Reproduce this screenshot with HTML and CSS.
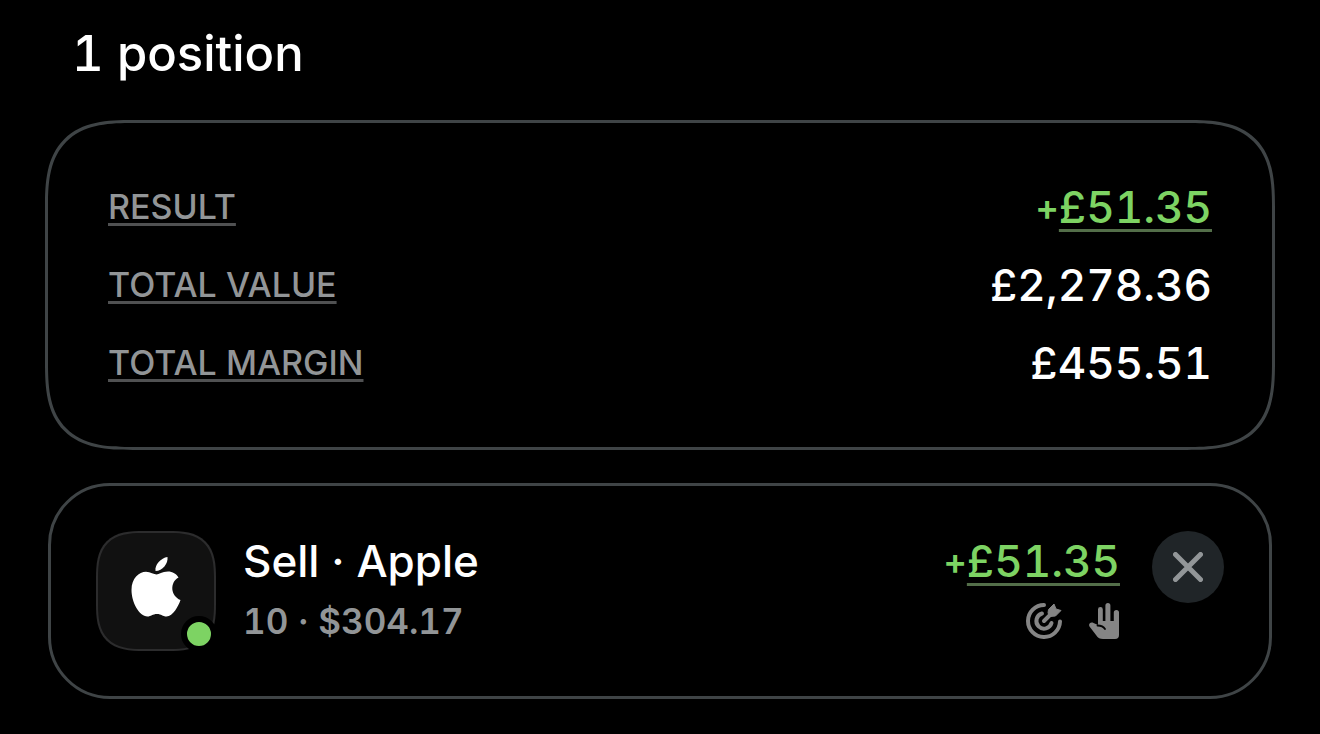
FILE: index.html
```html
<!doctype html>
<html lang="en">
  <head>
    <meta charset="utf-8">
    <title>Positions</title>
    <link rel="stylesheet" href="styles.css">
  </head>
  <body>
    <main class="positions">
      <h1 class="heading">1 position</h1>

      <dl class="card summary">
        <div class="row">
          <dt><button class="label">RESULT</button></dt>
          <dd class="amount gain"><span class="sign">+</span><button class="value">£51.35</button></dd>
        </div>
        <div class="row">
          <dt><button class="label">TOTAL VALUE</button></dt>
          <dd class="amount">£2,278.36</dd>
        </div>
        <div class="row">
          <dt><button class="label">TOTAL MARGIN</button></dt>
          <dd class="amount">£455.51</dd>
        </div>
      </dl>

      <section class="card position">
        <div class="logo">
          <svg class="apple" viewBox="0 0 50 60" aria-label="Apple">
            <path d="M36.500 0C37.300 6.500 31.500 14 24.500 14C23.500 7.500 30 1 36.500 0Z"/>
            <path d="M25.500 17.500C28 17.500 31 14.500 37 14.500C41.500 14.500 45.500 17 47.500 20.500C38.500 25.500 39.500 39 49.500 43C47.500 49 42 59.500 35.500 59.500C31.500 59.500 30.500 57 26 57C21.500 57 20 59.500 16.500 59.500C8 59.500 0.500 45 0.500 33C0.500 21 8 14.700 15 14.700C19.500 14.700 23 17.500 25.500 17.500Z"/>
          </svg>
          <span class="status"></span>
        </div>
        <div class="info">
          <h2 class="name">Sell · Apple</h2>
          <p class="detail">10 · $304.17</p>
        </div>
        <div class="outcome">
          <div class="amount gain"><span class="sign">+</span><button class="value">£51.35</button></div>
          <div class="flags">
            <svg class="flag" viewBox="0 0 36 36" aria-label="Take profit">
              <g fill="none" stroke="currentColor" stroke-width="4" stroke-linecap="round">
                <path d="M18 2A16 16 0 1 0 34 18.500"/>
                <path d="M16 10.500A7.700 7.700 0 1 0 25.500 20"/>
                <path d="M18 18L28 8"/>
              </g>
              <path fill="currentColor" stroke="currentColor" stroke-linejoin="round" d="M22 10L22.500 6.500L28 1L30 6L35 7.500L29.500 13L24 13.500Z"/>
            </svg>
            <svg class="flag hand" viewBox="0 0 31 36" aria-label="Manual order">
              <path fill="currentColor" d="M9 22V6.500a2.400 2.400 0 0 1 4.800 0V18h2.600V2.500a2.500 2.500 0 0 1 5 0V18h3.400V9.500a2.600 2.600 0 0 1 5.200 0V32a4 4 0 0 1-4 4H14c-3 0-5-1-7-4L0.500 23.500C-1 20.500 2 18.500 4.500 20L9 22Z"/>
              <path fill="none" stroke="#000" stroke-width="1.800" stroke-linecap="round" d="M8.500 22.500C12 22.500 14.500 23.500 16 26"/>
            </svg>
          </div>
        </div>
        <button class="close" aria-label="Close position">
          <svg viewBox="0 0 30 30"><path d="M2.500 2.500L27.500 27.500M27.500 2.500L2.500 27.500"/></svg>
        </button>
      </section>
    </main>
  </body>
</html>
```
FILE: styles.css
```css
body {
  margin: 0;
  background: #000;
  color: #fff;
  font-family: Inter, "Liberation Sans", sans-serif;
  font-weight: 500;
  font-feature-settings: "tnum";
}

h1, h2, p, dl, dd {
  margin: 0;
}

button {
  padding: 0;
  border: 0;
  background: none;
  color: inherit;
  font: inherit;
  font-feature-settings: inherit;
  cursor: pointer;
}

.positions {
  padding: 24px 45px 35px;
}

.heading {
  margin: 0 27px 36px;
  font-size: 49px;
  font-weight: 500;
  line-height: 60px;
}

.card {
  border: 3px solid #3f4446;
}

.summary {
  display: grid;
  gap: 30px;
  padding: 60px;
  border-radius: 88px;
  corner-shape: superellipse(1.5);
}

.row {
  display: flex;
  align-items: center;
  justify-content: space-between;
  height: 48px;
  line-height: 48px;
}

dt {
  display: flex;
}

.label,
.value {
  text-decoration: underline 3px #505152;
  text-decoration-skip-ink: none;
  text-underline-offset: 4px;
}

.label {
  color: #929597;
  font-size: 34px;
}

.amount {
  display: flex;
  align-items: center;
  font-size: 44px;
}

.gain {
  color: #7dd363;
}

.value {
  text-decoration-color: #536e49;
  text-underline-offset: 6px;
}

.sign {
  font-size: 36px;
  font-weight: 600;
}

.position {
  display: flex;
  margin: 33px 3px 0;
  padding: 45px;
  border-radius: 62px;
}

.logo {
  position: relative;
  display: grid;
  place-items: center;
  box-sizing: border-box;
  width: 120px;
  height: 120px;
  border: 2px solid #2c2c2d;
  border-radius: 48px;
  corner-shape: superellipse(1.5);
  background: #111;
}

.apple {
  width: 50px;
  height: 60px;
  margin-bottom: 8px;
  fill: #fff;
}

.status {
  position: absolute;
  right: -3px;
  bottom: -3px;
  width: 24px;
  height: 24px;
  border: 6px solid #000;
  border-radius: 50%;
  background: #7dd363;
}

.info {
  flex: 1;
  margin-left: 27px;
  line-height: 60px;
}

.name {
  font-size: 44px;
  font-weight: 500;
}

.detail {
  color: #929597;
  font-size: 35px;
  font-weight: 600;
}

.outcome {
  line-height: 60px;
}

.flags {
  display: flex;
  align-items: center;
  justify-content: flex-end;
  gap: 27px;
  height: 60px;
  color: #858585;
}

.flag {
  width: 36px;
  height: 36px;
}

.hand {
  width: 31px;
}

.close {
  display: grid;
  place-items: center;
  width: 72px;
  height: 72px;
  margin-left: 32px;
  border-radius: 50%;
  background: #202528;
}

.close svg {
  width: 30px;
  height: 30px;
  fill: none;
  stroke: #929698;
  stroke-width: 5px;
  stroke-linecap: round;
}
```
